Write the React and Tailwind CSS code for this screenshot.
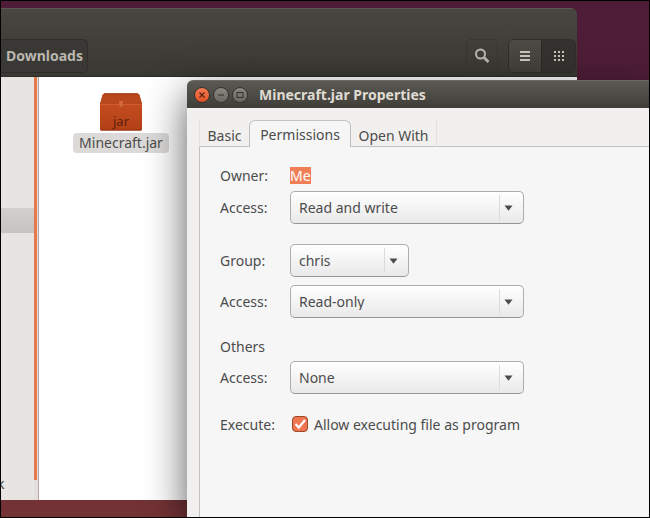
function WindowButton({ label, close, children }) {
  return (
    <button
      type="button"
      aria-label={label}
      className={`flex size-4 items-center justify-center rounded-full border border-[#35342f] ${
        close ? "bg-linear-to-b from-[#f47b55] to-[#e2501f] text-[#5a2413]" : "bg-linear-to-b from-[#8a887f] to-[#6a6862] text-[#3a3935]"
      }`}
    >
      <svg viewBox="0 0 14 14" className="size-3.5 shrink-0" fill="none" stroke="currentColor" strokeWidth="1.2">
        {children}
      </svg>
    </button>
  );
}

function Dropdown({ id, options, narrow }) {
  return (
    <div className={`relative h-[33px] ${narrow ? "w-[119px]" : "w-[234px]"}`}>
      <select
        id={id}
        className="size-full appearance-none rounded-[5px] border border-[#b0acaa] border-b-[#989492] bg-linear-to-b from-white to-[#e9e9e9] pr-8 pl-2 text-[#4c4c4c] outline-none"
      >
        {options.map((option) => (
          <option key={option}>{option}</option>
        ))}
      </select>
      <div className="pointer-events-none absolute inset-y-1 right-0 flex w-[25px] items-center border-l border-[#dcdcdc] pl-1">
        <svg viewBox="0 0 9 6" className="h-1.5 w-[9px]">
          <path d="M0.5 0.5H8.5L4.5 5.8Z" fill="#4c4c4c" />
        </svg>
      </div>
    </div>
  );
}

function Row({ label, htmlFor, children }) {
  return (
    <div className="grid grid-cols-[70px_1fr] items-center">
      <label htmlFor={htmlFor}>{label}</label>
      {children}
    </div>
  );
}

function JarIcon() {
  return (
    <svg viewBox="0 0 44 38" className="h-[38px] w-11">
      <defs>
        <linearGradient id="front" x1="0" y1="0" x2="0" y2="1">
          <stop offset="0" stopColor="#cb5222" />
          <stop offset="1" stopColor="#b24017" />
        </linearGradient>
      </defs>
      <path d="M6 0.500H38Q40 0.500 40.500 2L43 11V36Q43 37.500 41.500 37.500H2.500Q1 37.500 1 36V11L3.500 2Q4 0.500 6 0.500Z" fill="url(#front)" />
      <path d="M6 0.500H38Q40 0.500 40.500 2L43 11H1L3.500 2Q4 0.500 6 0.500Z" fill="#b9491d" />
      <path d="M5 1H39" stroke="#9a3b14" />
      <path d="M1.500 11.500H42.500" stroke="#d05e30" />
      <path d="M20 8H24L23.500 13L22 14L20.500 13Z" fill="#d26a40" />
      <path d="M1.500 37H42.500" stroke="#91330f" />
      <text x="22" y="33" textAnchor="middle" fontSize="13" fontFamily="Noto Sans, sans-serif" fill="#612009">
        jar
      </text>
    </svg>
  );
}

function FileManager() {
  return (
    <section className="absolute top-[7px] right-[72px] bottom-[17px] left-0 flex flex-col overflow-hidden rounded-tr-md">
      <header className="flex h-[68px] shrink-0 items-end justify-between border-t border-[#5b5954] bg-linear-to-b from-[#484641] to-[#3a3833] pr-px pb-[3px]">
        <button
          type="button"
          className="h-[34px] rounded-r-[5px] border border-l-0 border-[#2f2e2a] bg-[#393834] pr-1 pl-[5px] text-sm font-bold text-[#bab7ae]"
        >
          Downloads
        </button>
        <div className="flex gap-2.5">
          <button
            type="button"
            aria-label="Search"
            className="flex h-[34px] w-8 items-center justify-center rounded-[5px] border border-[#383631] text-[#bab7ae]"
          >
            <svg viewBox="0 0 16 16" className="size-4" fill="none" stroke="currentColor">
              <circle cx="6.500" cy="6" r="4.500" strokeWidth="2" />
              <path d="M10 9.500L14.500 14" strokeWidth="2.600" />
            </svg>
          </button>
          <div className="flex h-[34px] overflow-hidden rounded-[5px] border border-[#2f2e2a]">
            <button
              type="button"
              aria-label="List view"
              className="flex w-[33px] items-center justify-center border-r border-[#2b2a26] bg-linear-to-b from-[#4c4a45] to-[#42403b] text-[#c8c5bc]"
            >
              <svg viewBox="0 0 10 11" className="h-[11px] w-2.5" fill="currentColor">
                <rect width="10" height="2" y="0" />
                <rect width="10" height="2" y="4" />
                <rect width="10" height="2" y="8" />
              </svg>
            </button>
            <button
              type="button"
              aria-label="Icon view"
              className="flex w-[33px] items-center justify-center bg-[#33322e] text-[#c8c5bc]"
            >
              <svg viewBox="0 0 10 10" className="size-2.5" fill="currentColor">
                {[0, 4, 8].map((y) => [0, 4, 8].map((x) => <rect key={`${x}-${y}`} x={x} y={y} width="2" height="2" />))}
              </svg>
            </button>
          </div>
        </div>
      </header>
      <div className="flex min-h-0 flex-1 border-t border-[#2c2b27]">
        <aside className="flex w-[33px] flex-col justify-between bg-[#e7e4e1] pt-[131px] pb-2 text-sm text-[#4c4c4c]">
          <div className="h-[25px] bg-linear-to-b from-[#d2cfcc] to-[#c5c2bf]" />
          <div className="-ml-1 leading-4">k</div>
        </aside>
        <div className="w-1 border-r border-[#ebdcd4] bg-[#e2e0de] pb-5">
          <div className="h-full bg-[#e47b4c]" />
        </div>
        <main className="flex-1 border-l border-[#b9a3ab] bg-white pt-4 pl-[34px]">
          <figure className="flex w-24 flex-col items-center gap-0.5">
            <JarIcon />
            <figcaption className="flex h-5 w-full items-center justify-center rounded bg-[#dcdad8] text-sm text-[#4c4c4c]">
              Minecraft.jar
            </figcaption>
          </figure>
        </main>
      </div>
    </section>
  );
}

function PropertiesDialog() {
  return (
    <section className="absolute top-[79px] right-0 bottom-0 left-[186px] flex flex-col rounded-tl-md bg-[#f2f0ee] shadow-[0_14px_40px_rgba(0,0,0,0.65)]">
      <header className="flex h-7 shrink-0 items-center gap-[3px] rounded-tl-md border-t border-[#6a6861] bg-linear-to-b from-[#5b5953] to-[#403e39] pl-[7px]">
        <WindowButton label="Close" close>
          <path d="M4.500 4.500L9.500 9.500M9.500 4.500L4.500 9.500" />
        </WindowButton>
        <WindowButton label="Minimize">
          <path d="M4 7H10" />
        </WindowButton>
        <WindowButton label="Maximize">
          <rect x="4" y="4.500" width="6" height="5" />
        </WindowButton>
        <h1 className="pl-2 text-sm font-bold text-[#dfdbd2]">Minecraft.jar Properties</h1>
      </header>
      <div className="flex flex-1 flex-col pt-3 pl-3">
        <div role="tablist" className="flex h-[27px] shrink-0">
          <button type="button" role="tab" aria-selected="false" className="w-[50px] border-b border-l border-b-[#c3c1bf] border-l-[#e4e1df] pt-1">
            Basic
          </button>
          <button
            type="button"
            role="tab"
            aria-selected="true"
            className="w-[102px] rounded-t-md border border-b-0 border-[#c3c1bf] bg-[#f6f6f6]"
          >
            Permissions
          </button>
          <button type="button" role="tab" aria-selected="false" className="w-[86px] border-r border-b border-r-[#e4e1df] border-b-[#c3c1bf] pt-1">
            Open With
          </button>
          <div className="flex-1 border-b border-[#c3c1bf]" />
        </div>
        <form className="flex flex-1 flex-col gap-5 border-l border-[#c3c1bf] bg-[#f6f6f6] pt-5 pl-5">
          <div className="flex flex-col gap-[7px]">
            <Row label="Owner:" htmlFor="owner">
              <output id="owner" className="h-[17px] justify-self-start bg-[#f07f58] leading-[17px] text-white">
                Me
              </output>
            </Row>
            <Row label="Access:" htmlFor="owner-access">
              <Dropdown id="owner-access" options={["Read and write", "Read-only"]} />
            </Row>
          </div>
          <div className="flex flex-col gap-2">
            <Row label="Group:" htmlFor="group">
              <Dropdown id="group" options={["chris"]} narrow />
            </Row>
            <Row label="Access:" htmlFor="group-access">
              <Dropdown id="group-access" options={["Read-only", "Read and write", "None"]} />
            </Row>
          </div>
          <div className="flex flex-col gap-1.5">
            <h2>Others</h2>
            <Row label="Access:" htmlFor="others-access">
              <Dropdown id="others-access" options={["None", "Read-only", "Read and write"]} />
            </Row>
          </div>
          <div className="grid h-5 grid-cols-[70px_1fr] items-center">
            <span>Execute:</span>
            <label className="flex items-center gap-1.5 pl-0.5">
              <span className="relative size-4">
                <input
                  type="checkbox"
                  defaultChecked
                  className="peer block size-4 appearance-none rounded border border-[#9c4a2c] bg-white checked:bg-[#ee7650]"
                />
                <svg
                  viewBox="0 0 16 16"
                  className="pointer-events-none absolute inset-0 hidden size-4 peer-checked:block"
                  fill="none"
                  stroke="white"
                  strokeWidth="2.200"
                >
                  <path d="M3.500 8L6.800 11.500L13 4" />
                </svg>
              </span>
              Allow executing file as program
            </label>
          </div>
        </form>
      </div>
    </section>
  );
}

export default function App() {
  return (
    <div className="relative h-screen overflow-hidden border border-black bg-linear-to-b from-[#4e1c36] via-[#4f2038] to-[#743335] font-['Noto_Sans','Open_Sans',sans-serif] text-sm leading-[17px] text-[#4c4c4c]">
      <FileManager />
      <PropertiesDialog />
    </div>
  );
}
